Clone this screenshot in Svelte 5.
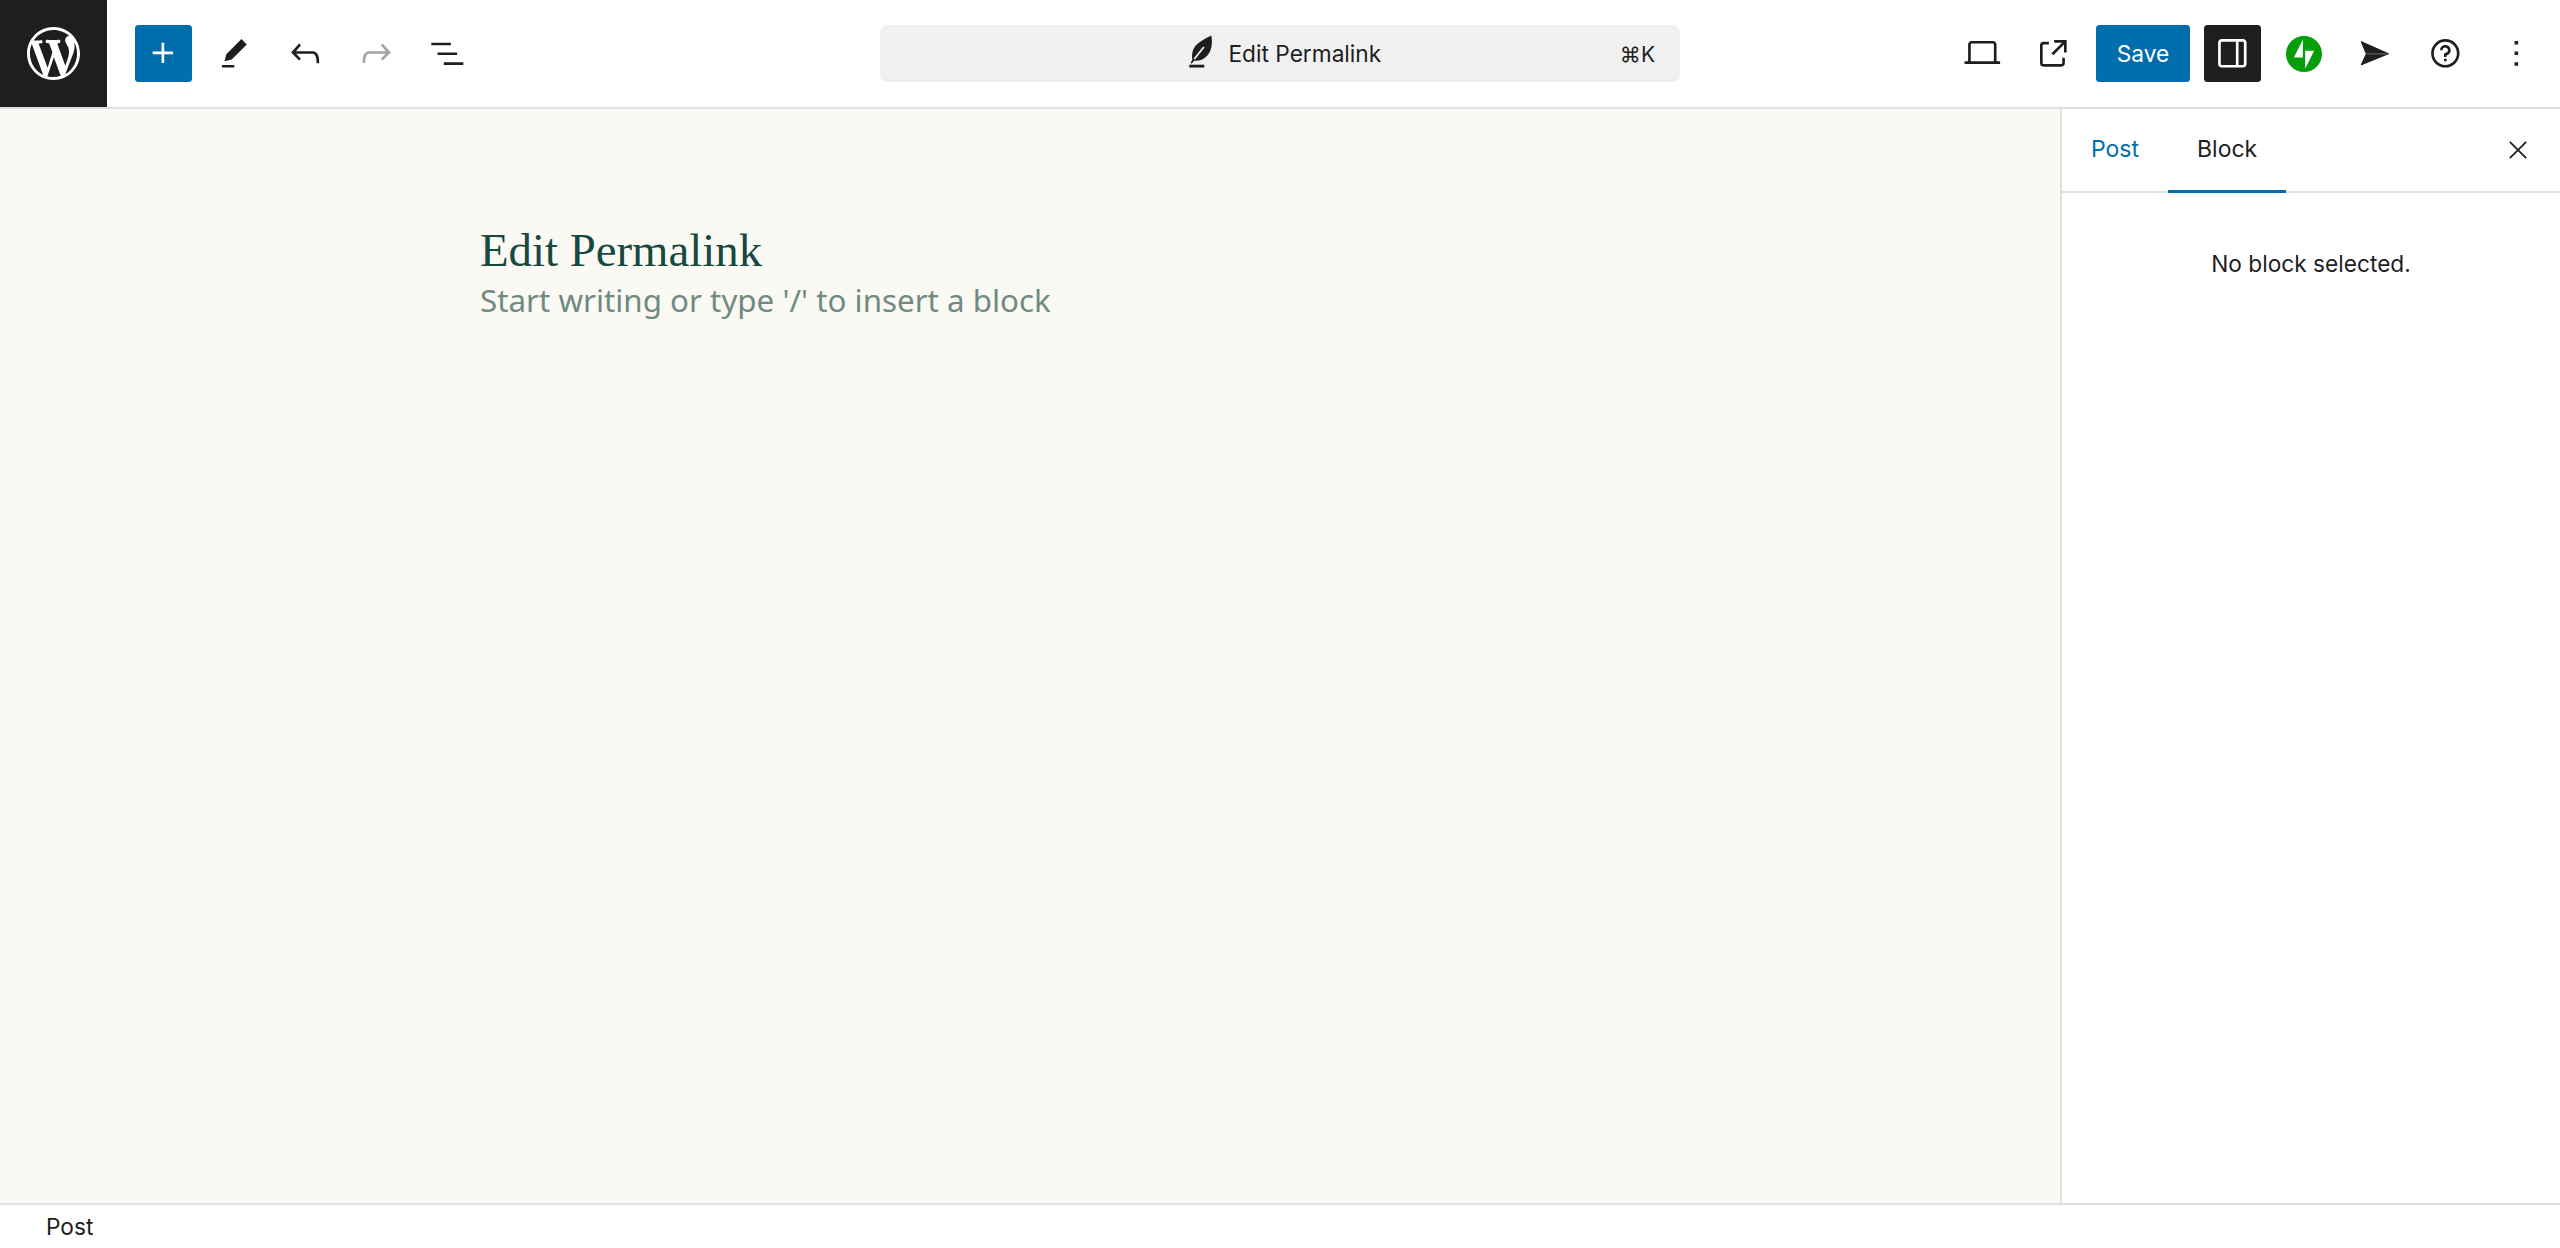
<script>
	const leftTools = [
		{ name: 'edit', d: 'm19 7-3-3-8.5 8.5-1 4 4-1L19 7Zm-7 11.5H5V20h7v-1.5Z' },
		{
			name: 'undo',
			d: 'M18.3 11.7c-.6-.6-1.4-.9-2.3-.9H6.7l2.9-3.3-1.1-1-4.5 5L8.5 16l1-1-2.7-2.7H16c.5 0 .9.2 1.3.5 1 1 1 3.4 1 4.5v.3h1.5v-.2c0-1.5 0-4.3-1.5-5.7z'
		},
		{
			name: 'redo',
			d: 'M15.6 6.5l-1.1 1 2.9 3.3H8c-.9 0-1.7.3-2.3.9-1.4 1.5-1.4 4.2-1.4 5.6v.2h1.5v-.3c0-1.1 0-3.5 1-4.5.3-.3.7-.5 1.3-.5h9.2L14.5 15l1.1 1.1 4.6-4.6-4.6-5z',
			disabled: true
		},
		{ name: 'list', d: 'M3 6h11v1.5H3V6Zm3.5 5.5h11V13h-11v-1.5ZM21 17H10v1.5h11V17Z' }
	];

	const laptop =
		'M20 16.5V7c0-1.1-.9-2-2-2H6c-1.1 0-2 .9-2 2v9.5H2V18h20v-1.5h-2ZM5.5 7a.5.5 0 0 1 .5-.5h12a.5.5 0 0 1 .5.5v9.5h-13V7Z';
	const external =
		'M19.5 4.5h-7V6h4.44l-5.97 5.97 1.06 1.06L18 7.06v4.44h1.5v-7Zm-13 1a2 2 0 0 0-2 2v10a2 2 0 0 0 2 2h10a2 2 0 0 0 2-2v-3H17v3a.5.5 0 0 1-.5.5h-10a.5.5 0 0 1-.5-.5v-10a.5.5 0 0 1 .5-.5h3V5.5h-3Z';
	const drawer =
		'M18 4H6c-1.1 0-2 .9-2 2v12c0 1.1.9 2 2 2h12c1.1 0 2-.9 2-2V6c0-1.1-.9-2-2-2zm-4 14.5H6c-.3 0-.5-.2-.5-.5V6c0-.3.2-.5.5-.5h8v13zm4.5-.5c0 .3-.2.5-.5.5h-2.5v-13H18c.3 0 .5.2.5.5v12z';
	const help =
		'M12 4a8 8 0 1 1 .001 16.001A8 8 0 0 1 12 4Zm0 1.5a6.5 6.5 0 1 0-.001 13.001A6.5 6.5 0 0 0 12 5.5Zm.75 11h-1.5V15h1.5v1.5Zm-.445-9.234a3 3 0 0 1 .445 5.89V14h-1.5v-1.25c0-.57.452-.958.917-1.01A1.5 1.5 0 0 0 12 8.75a1.5 1.5 0 0 0-1.5 1.5H9a3 3 0 0 1 3.305-2.984Z';
	const more = 'M13 19h-2v-2h2v2zm0-6h-2v-2h2v2zm0-6h-2V5h2v2z';
	const close =
		'm13.06 12 6.47-6.47-1.06-1.06L12 10.94 5.53 4.47 4.47 5.53 10.94 12l-6.47 6.47 1.06 1.06L12 13.06l6.47 6.47 1.06-1.06L13.06 12Z';
	const wordpress =
		'M20 10c0-5.51-4.49-10-10-10C4.48 0 0 4.49 0 10c0 5.52 4.48 10 10 10 5.51 0 10-4.48 10-10zM7.78 15.37L4.37 6.22c.55-.02 1.17-.08 1.17-.08.5-.06.44-1.13-.06-1.11 0 0-1.45.11-2.37.11-.18 0-.37 0-.58-.01C4.12 2.69 6.87 1.11 10 1.11c2.33 0 4.45.87 6.05 2.34-.68-.11-1.65.39-1.65 1.58 0 .74.45 1.36.9 2.1.35.61.55 1.36.55 2.46 0 1.49-1.4 5-1.4 5l-3.03-8.37c.54-.02.82-.17.82-.17.5-.05.44-1.25-.06-1.22 0 0-1.44.12-2.38.12-.87 0-2.33-.12-2.33-.12-.5-.03-.56 1.2-.06 1.22l.92.08 1.26 3.41zM17.41 10c.24-.64.74-1.87.43-4.25.7 1.29 1.05 2.71 1.05 4.25 0 3.29-1.73 6.24-4.4 7.78.97-2.59 1.94-5.2 2.92-7.78zM6.1 18.09C3.12 16.65 1.11 13.53 1.11 10c0-1.3.23-2.48.72-3.59C3.25 10.3 4.67 14.2 6.1 18.09zm4.03-6.63l2.58 6.98c-.86.29-1.76.45-2.71.45-.79 0-1.57-.11-2.29-.33.81-2.38 1.62-4.74 2.42-7.1z';
</script>

{#snippet icon(d)}
	<svg class="icon" viewBox="0 0 24 24" fill="currentColor"><path {d} /></svg>
{/snippet}

<div class="editor">
	<header class="topbar">
		<div class="left">
			<a class="wp" href="#top" aria-label="Back">
				<svg viewBox="0 0 20 20" width="53" height="53" fill="#fff"><path d={wordpress} /></svg>
			</a>
			<div class="tools">
				<button class="btn primary square" aria-label="Add block">
					<svg class="icon" viewBox="0 0 24 24" fill="currentColor">
						<path d="M11 12.5V17.5H12.5V12.5H17.5V11H12.5V6H11V11H6V12.5H11Z" />
					</svg>
				</button>
				{#each leftTools as tool}
					<button class="btn square" class:disabled={tool.disabled} aria-label={tool.name}>
						{@render icon(tool.d)}
					</button>
				{/each}
			</div>
		</div>

		<div class="command">
			<span class="title">
				<svg class="icon" viewBox="0 0 24 24" fill="currentColor">
					<path d="M18.2 1.9c.7 4.2.2 7.9-1.7 10.6-1.8 2.5-4.6 3.8-8 3.7l-1.4 1.6-.6-.5 1-1.6c-.5-3.4.2-6.4 2.5-8.7 1.9-1.9 4.6-3.4 8.2-5.1Z" />
					<path d="M8.6 15.2 14 8.4" stroke="#f0f0f0" stroke-width="1" fill="none" />
					<path d="M5.8 18.4h8.4v1.6H5.8z" />
				</svg>
				<span>Edit Permalink</span>
			</span>
			<span class="shortcut">⌘K</span>
		</div>

		<div class="right">
			<button class="btn square" aria-label="View">{@render icon(laptop)}</button>
			<button class="btn square" aria-label="View post">{@render icon(external)}</button>
			<button class="btn primary save">Save</button>
			<button class="btn square dark" aria-label="Settings">{@render icon(drawer)}</button>
			<button class="btn square" aria-label="Jetpack">
				<svg viewBox="0 0 32 32" width="36" height="36">
					<circle cx="16" cy="16" r="16" fill="#069e08" />
					<path d="M15 19H7l8-16v16Zm2 10V13h8l-8 16Z" fill="#fff" />
				</svg>
			</button>
			<button class="btn square" aria-label="Publish">
				<svg class="icon" viewBox="0 0 24 24">
					<path d="M4.7 5.5 19.9 12.3 4.7 18.4 7.5 12.3Z" fill="#1e1e1e" stroke="#1e1e1e" stroke-width=".6" stroke-linejoin="round" />
					<path d="M7.5 12.3H19" stroke="#777" stroke-width=".5" />
				</svg>
			</button>
			<button class="btn square" aria-label="Help">{@render icon(help)}</button>
			<button class="btn square" aria-label="Options">{@render icon(more)}</button>
		</div>
	</header>

	<main class="body">
		<section class="canvas">
			<h1>Edit Permalink</h1>
			<p>Start writing or type '/' to insert a block</p>
		</section>
		<aside class="sidebar">
			<div class="tabs">
				<button class="tab active-link">Post</button>
				<button class="tab current">Block</button>
				<button class="btn square close" aria-label="Close">{@render icon(close)}</button>
			</div>
			<div class="empty">No block selected.</div>
		</aside>
	</main>

	<footer class="footer">Post</footer>
</div>

<style>
	:global(body) {
		background: #fff;
	}

	.editor {
		height: 1248px;
		display: flex;
		flex-direction: column;
		overflow: hidden;
		font-family: Inter, 'Liberation Sans', sans-serif;
		font-size: 22.7px;
		color: #1e1e1e;
	}

	button {
		font: inherit;
		color: inherit;
		background: none;
		border: 0;
		padding: 0;
		cursor: pointer;
	}

	.icon {
		width: 42.67px;
		height: 42.67px;
		display: block;
	}

	.topbar {
		height: 109px;
		flex-shrink: 0;
		box-sizing: border-box;
		border-bottom: 2px solid #e0e0e0;
		display: grid;
		grid-template-columns: 1fr 800px 1fr;
		align-items: center;
	}

	.left,
	.tools,
	.right {
		display: flex;
		align-items: center;
		gap: 14px;
	}

	.left {
		gap: 28px;
		height: 107px;
	}

	.wp {
		width: 107px;
		height: 107px;
		background: #1e1e1e;
		display: flex;
		align-items: center;
		justify-content: center;
	}

	.right {
		justify-content: flex-end;
		padding-right: 15px;
	}

	.btn {
		height: 57px;
		border-radius: 3.5px;
		display: flex;
		align-items: center;
		justify-content: center;
	}

	.square {
		width: 57px;
	}

	.primary {
		background: #006ead;
		color: #fff;
	}

	.dark {
		background: #1e1e1e;
		color: #fff;
	}

	.disabled {
		opacity: 0.4;
	}

	.save {
		width: 94px;
	}

	.command {
		position: relative;
		height: 57px;
		background: #f0f0f0;
		border-radius: 7px;
		display: flex;
		align-items: center;
		justify-content: center;
	}

	.title {
		display: flex;
		align-items: center;
		gap: 7px;
	}

	.shortcut {
		position: absolute;
		right: 25px;
		top: 50%;
		transform: translateY(-50%);
		font-size: 21px;
	}

	.body {
		flex: 1;
		display: flex;
		min-height: 0;
	}

	.canvas {
		flex: 1;
		background: #fbf9f4;
		padding: 108px 0 0 480px;
	}

	h1 {
		margin: 0;
		font-family: 'Liberation Serif', serif;
		font-weight: 400;
		font-size: 46.8px;
		line-height: 66px;
		color: #16493f;
	}

	p {
		margin: 0;
		font-family: 'Noto Sans', sans-serif;
		font-size: 31.3px;
		line-height: 35px;
		color: #6f8b81;
	}

	.sidebar {
		width: 500px;
		box-sizing: border-box;
		border-left: 2px solid #e0e0e0;
		background: #fff;
	}

	.tabs {
		height: 84px;
		box-sizing: border-box;
		border-bottom: 2px solid #e0e0e0;
		display: flex;
		align-items: stretch;
	}

	.tab {
		padding: 0 29px 2px;
		font-size: 23px;
		position: relative;
	}

	.active-link {
		color: #006ead;
	}

	.current::after {
		content: '';
		position: absolute;
		left: 0;
		right: 0;
		bottom: -2px;
		height: 3px;
		background: #006ead;
	}

	.close {
		margin: auto 14px auto auto;
	}

	.close .icon {
		width: 28px;
		height: 28px;
	}

	.empty {
		text-align: center;
		padding-top: 57px;
		line-height: 28px;
	}

	.footer {
		height: 45px;
		flex-shrink: 0;
		box-sizing: border-box;
		border-top: 2px solid #e0e0e0;
		padding-left: 46px;
		display: flex;
		align-items: center;
		color: #1e1e1e;
	}
</style>
